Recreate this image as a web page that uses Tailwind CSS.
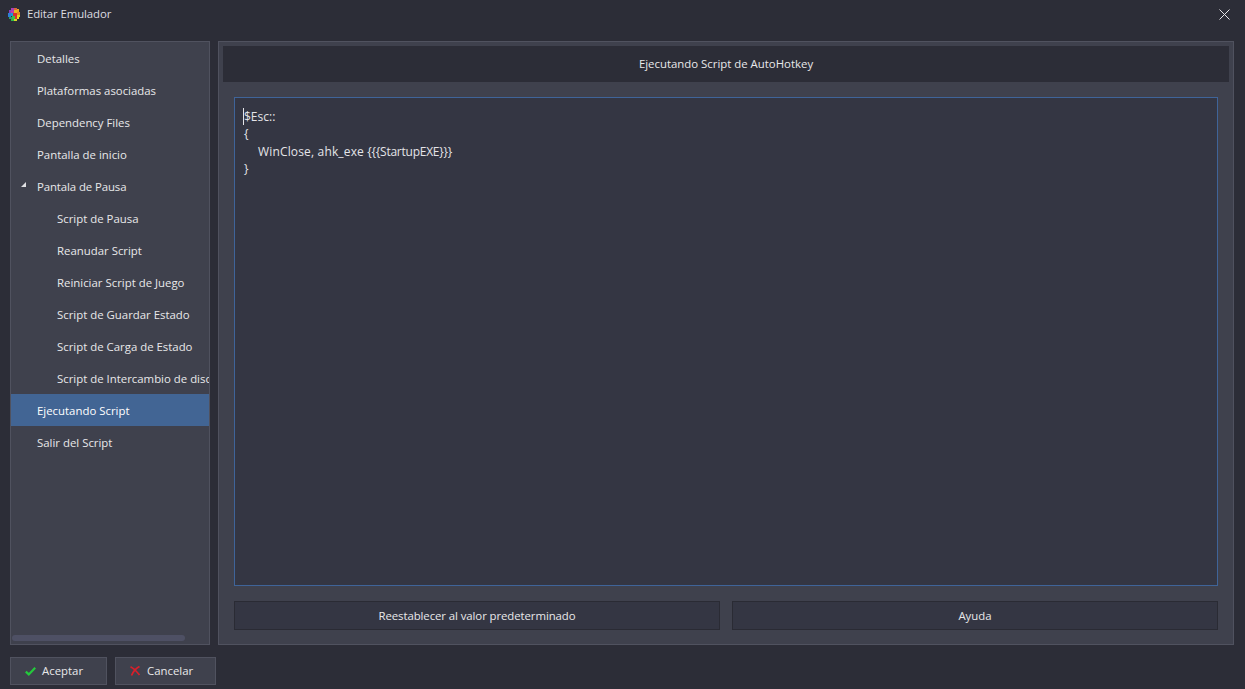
<!DOCTYPE html>
<html><head><meta charset="utf-8"><script src="https://cdn.jsdelivr.net/npm/@tailwindcss/browser@4"></script></head>
<body class="m-0">
<div class="w-[1245px] h-[689px] overflow-hidden bg-[#2c2d37] flex flex-col text-[11.4px] leading-[16px] text-[#e8e8ea] font-['Open_Sans',sans-serif]">
  <div class="h-[28px] shrink-0 pl-[8px] pr-[15px] flex items-center">
    <svg width="13" height="13" viewBox="0 0 13 13" class="shrink-0" shape-rendering="crispEdges">
      <rect x="3" y="0" width="3" height="3" fill="#a63fb8"/><rect x="6" y="0" width="3" height="2" fill="#d9663a"/><rect x="9" y="1" width="2" height="3" fill="#e9a820"/>
      <rect x="1" y="2" width="2" height="3" fill="#8a3fc0"/><rect x="3" y="3" width="3" height="2" fill="#c23fa0"/><rect x="6" y="2" width="3" height="3" fill="#e8b81f"/><rect x="9" y="4" width="3" height="3" fill="#e88a20"/>
      <rect x="0" y="5" width="3" height="4" fill="#2d7fd6"/><rect x="3" y="5" width="2" height="3" fill="#1e9bd0"/><rect x="5" y="5" width="4" height="3" fill="#d9302b"/><rect x="9" y="7" width="3" height="2" fill="#e6d321"/>
      <rect x="1" y="9" width="3" height="2" fill="#2f9f6a"/><rect x="4" y="8" width="3" height="3" fill="#3ac24a"/><rect x="7" y="8" width="2" height="3" fill="#e0302b"/><rect x="9" y="9" width="2" height="2" fill="#e8dc20"/>
      <rect x="3" y="11" width="3" height="2" fill="#2eb84a"/><rect x="6" y="11" width="3" height="2" fill="#d7d827"/>
    </svg>
    <span class="ml-[6px] text-[#dcdce0] tracking-[-0.1px]">Editar Emulador</span>
    <svg width="11" height="11" viewBox="0 0 11 11" class="ml-auto" fill="none" stroke="#e4e4e8" stroke-width="1"><path d="M0.5 0.5 L10.5 10.5 M10.5 0.5 L0.5 10.5"/></svg>
  </div>
  <div class="h-[13px] shrink-0"></div>
  <div class="flex gap-[8px] pl-[10px] pr-[11px] h-[604px] shrink-0">
    <div class="relative w-[200px] border border-[#50525f] bg-[#3f414d] overflow-hidden">
      <div class="h-[32px] flex items-center pt-[2px] pl-[26px] whitespace-nowrap">Detalles</div>
      <div class="h-[32px] flex items-center pt-[2px] pl-[26px] whitespace-nowrap">Plataformas asociadas</div>
      <div class="h-[32px] flex items-center pt-[2px] pl-[26px] whitespace-nowrap">Dependency Files</div>
      <div class="h-[32px] flex items-center pt-[2px] pl-[26px] whitespace-nowrap">Pantalla de inicio</div>
      <div class="relative h-[32px] flex items-center pt-[2px] pl-[26px] whitespace-nowrap">
        <svg width="5" height="5" viewBox="0 0 5 5" class="absolute left-[10px] top-[12px]"><path d="M5 0 V5 H0Z" fill="#e0e0e4"/></svg>
        <span class="tracking-[-0.1px]">Pantala de Pausa</span></div>
      <div class="h-[32px] flex items-center pt-[2px] pl-[46px] whitespace-nowrap">Script de Pausa</div>
      <div class="h-[32px] flex items-center pt-[2px] pl-[46px] whitespace-nowrap">Reanudar Script</div>
      <div class="h-[32px] flex items-center pt-[2px] pl-[46px] whitespace-nowrap">Reiniciar Script de Juego</div>
      <div class="h-[32px] flex items-center pt-[2px] pl-[46px] whitespace-nowrap">Script de Guardar Estado</div>
      <div class="h-[32px] flex items-center pt-[2px] pl-[46px] whitespace-nowrap">Script de Carga de Estado</div>
      <div class="h-[32px] flex items-center pt-[2px] pl-[46px] whitespace-nowrap">Script de Intercambio de discos</div>
      <div class="h-[32px] flex items-center pt-[2px] pl-[26px] whitespace-nowrap bg-[#426594] text-white">Ejecutando Script</div>
      <div class="h-[32px] flex items-center pt-[2px] pl-[26px] whitespace-nowrap">Salir del Script</div>
      <div class="absolute left-[1px] bottom-[3px] w-[173px] h-[6px] rounded-full bg-[#4e5064]"></div>
    </div>
    <div class="flex-1 min-w-0 border border-[#50525f] bg-[#3f414d] p-[4px] flex flex-col">
      <div class="h-[36px] shrink-0 bg-[#2c2d37] flex items-center justify-center">Ejecutando Script de AutoHotkey</div>
      <div class="flex-1 min-h-0 px-[11px] pt-[15px] pb-[14px] flex flex-col">
        <div class="relative h-[489px] shrink-0 border border-[#3f6499] bg-[#343643] pl-[9px] pt-[10px] leading-[17px] text-[12px] text-[#e4e4e8]">
          <div class="absolute left-[8px] top-[10px] w-px h-[17px] bg-[#e4e4e8]"></div>
          <div>$Esc::</div>
          <div>{</div>
          <div class="pl-[14px] mt-[1px]"><span class="tracking-[0.16px]">WinClose, ahk_exe </span><span class="tracking-[-0.25px]">{{{StartupEXE}}}</span></div>
          <div>}</div>
        </div>
        <div class="mt-[15px] flex gap-[12px]">
          <div class="flex-1 h-[29px] border border-[#2a2b34] bg-[#343643] flex items-center justify-center"><span class="tracking-[-0.08px]">Reestablecer al valor predeterminado</span></div>
          <div class="flex-1 h-[29px] border border-[#2a2b34] bg-[#343643] flex items-center justify-center">Ayuda</div>
        </div>
      </div>
    </div>
  </div>
  <div class="mt-[12px] pl-[10px] flex gap-[8px]">
    <div class="w-[97px] h-[28px] border border-[#50525f] bg-[#3f414d] flex items-center pl-[14px]">
      <svg width="11" height="9" viewBox="0 0 11 9" fill="none" stroke="#24c93c" stroke-width="2.2"><path d="M0.8 4.6 L3.8 7.4 L10.2 0.8"/></svg>
      <span class="ml-[6px]">Aceptar</span>
    </div>
    <div class="w-[101px] h-[28px] border border-[#50525f] bg-[#3f414d] flex items-center pl-[14px]">
      <svg width="10" height="10" viewBox="0 0 10 10" fill="none" stroke="#d81f2a" stroke-width="1.8"><path d="M0.5 0.8 Q5 3 9.5 9 M9.5 0.5 Q4 3.5 1.5 9.5"/></svg>
      <span class="ml-[7px]">Cancelar</span>
    </div>
  </div>
</div>
</body></html>
